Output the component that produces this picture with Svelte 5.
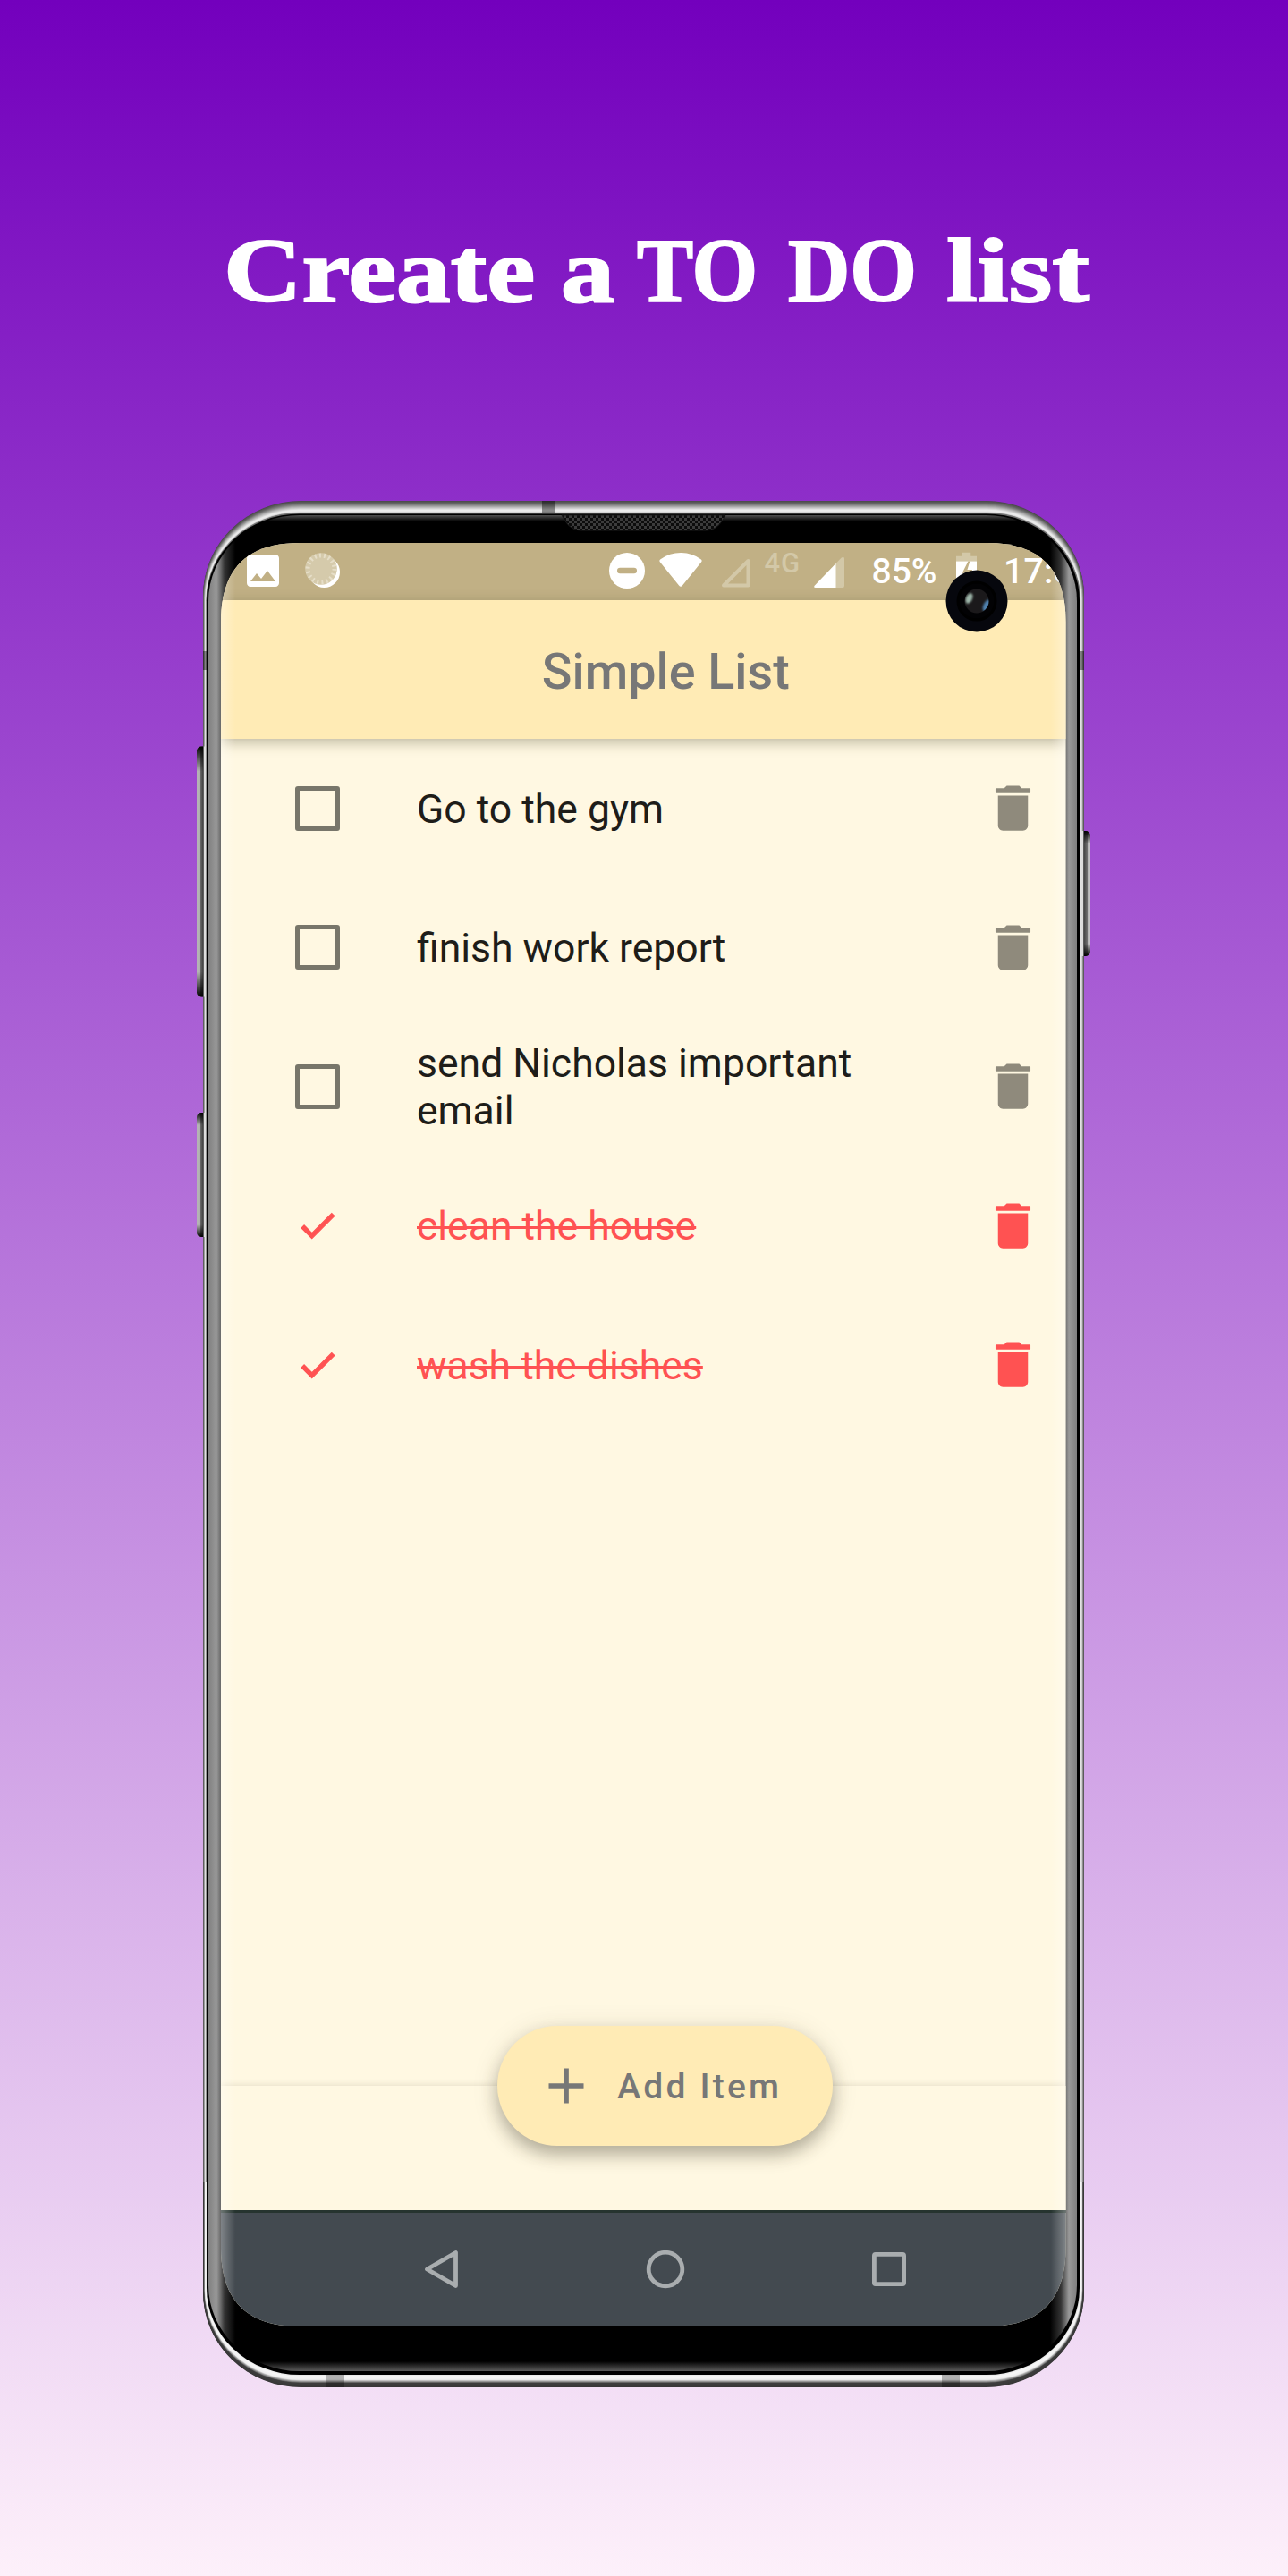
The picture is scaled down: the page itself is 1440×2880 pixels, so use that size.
<script>
  const items = [
    { text: 'Go to the gym', done: false },
    { text: 'finish work report', done: false },
    { text: 'send Nicholas important email', done: false },
    { text: 'clean the house', done: true },
    { text: 'wash the dishes', done: true },
  ];

  // Headline words with their start and measured width
  const words = [
    { text: 'Create', x: 250, w: 348 },
    { text: 'a', x: 627, w: 60 },
    { text: 'TO', x: 712, w: 135 },
    { text: 'DO', x: 881, w: 144 },
    { text: 'list', x: 1058, w: 160 },
  ];

  // Brightness profiles of the metal rim, from its outer edge inwards
  const topProfile = [[0, 74], [0.2, 105], [0.45, 175], [0.7, 238], [0.85, 225], [0.88, 120], [1, 110]];
  const bottomProfile = [[0, 56], [0.33, 64], [0.36, 110], [0.5, 190], [0.56, 238], [0.8, 248], [1, 225]];

  function sample(profile, t) {
    for (let i = 1; i < profile.length; i++) {
      const [t1, v1] = profile[i];
      if (t <= t1) {
        const [t0, v0] = profile[i - 1];
        return Math.round(v0 + ((v1 - v0) * (t - t0)) / (t1 - t0));
      }
    }
    return profile[profile.length - 1][1];
  }

  function makeRings(profile) {
    return Array.from({ length: 29 }, (_, i) => {
      const t = i / 28;
      const v = sample(profile, t);
      return {
        x: 227 + 4 * t, y: 560 + 14.5 * t,
        w: 985 - 8.500 * t, h: 2109 - 29 * t,
        rx: 110 - 6 * t, ry: 106 - 9 * t,
        fill: `rgb(${v},${v},${v})`,
      };
    });
  }

  const rims = [
    { clip: 'url(#upper)', rings: makeRings(topProfile) },
    { clip: 'url(#lower)', rings: makeRings(bottomProfile) },
  ];
</script>

<main class="page">
  <svg class="headline" viewBox="0 0 1440 540" role="img" aria-label="Create a TO DO list">
    {#each words as word}
      <text x={word.x} y="337" textLength={word.w} lengthAdjust="spacingAndGlyphs">{word.text}</text>
    {/each}
  </svg>

  <div class="phone">
    <svg class="frame" viewBox="210 540 1030 2140">
      <defs>
        <linearGradient id="edgeL" gradientUnits="userSpaceOnUse" x1="233" y1="0" x2="263" y2="0">
          <stop offset="0" stop-color="#808080" />
          <stop offset="0.3" stop-color="#999" />
          <stop offset="0.46" stop-color="#6a6a6a" />
          <stop offset="0.6" stop-color="#333" />
          <stop offset="1" stop-color="#000" />
        </linearGradient>
        <linearGradient id="edgeR" gradientUnits="userSpaceOnUse" x1="1204" y1="0" x2="1174" y2="0">
          <stop offset="0" stop-color="#808080" />
          <stop offset="0.3" stop-color="#999" />
          <stop offset="0.44" stop-color="#6a6a6a" />
          <stop offset="0.6" stop-color="#333" />
          <stop offset="1" stop-color="#000" />
        </linearGradient>
        <linearGradient id="lipTop" x1="0" y1="0" x2="0" y2="1">
          <stop offset="0" stop-color="#505050" />
          <stop offset="1" stop-color="#000" />
        </linearGradient>
        <linearGradient id="lipBottom" x1="0" y1="0" x2="0" y2="1">
          <stop offset="0" stop-color="#000" />
          <stop offset="1" stop-color="#5a5a5a" />
        </linearGradient>
        <linearGradient id="keyL" x1="0" y1="0" x2="1" y2="0">
          <stop offset="0" stop-color="#b5b5b5" />
          <stop offset="0.35" stop-color="#b0b0b0" />
          <stop offset="0.45" stop-color="#666" />
          <stop offset="1" stop-color="#111" />
        </linearGradient>
        <linearGradient id="keyR" x1="1" y1="0" x2="0" y2="0">
          <stop offset="0" stop-color="#c4c4c4" />
          <stop offset="0.25" stop-color="#b5b5b5" />
          <stop offset="0.35" stop-color="#6e6e6e" />
          <stop offset="1" stop-color="#222" />
        </linearGradient>
        <linearGradient id="keyEnds" x1="0" y1="0" x2="0" y2="1">
          <stop offset="0" stop-color="#000" />
          <stop offset="0.1" stop-color="#000" stop-opacity="0" />
          <stop offset="0.9" stop-color="#000" stop-opacity="0" />
          <stop offset="1" stop-color="#000" />
        </linearGradient>
        <pattern id="mesh" width="6" height="6" patternUnits="userSpaceOnUse">
          <rect width="6" height="6" fill="#0c0c0c" />
          <rect width="3" height="3" fill="#3c3c3c" />
          <rect x="3" y="3" width="3" height="3" fill="#3c3c3c" />
        </pattern>
        <clipPath id="glass">
          <rect x="233" y="576" width="971" height="2075" rx="102" ry="96" />
        </clipPath>
        <clipPath id="upper"><rect x="210" y="540" width="1030" height="1900" /></clipPath>
        <clipPath id="lower"><rect x="210" y="2440" width="1030" height="240" /></clipPath>
      </defs>

      {#each [[834.5, 280], [1244, 139]] as [y, h]}
        <path d="M230 {y}h-5a5 5 0 0 0-5 5v{h - 10}a5 5 0 0 0 5 5h5z" fill="url(#keyL)" />
        <path d="M230 {y}h-5a5 5 0 0 0-5 5v{h - 10}a5 5 0 0 0 5 5h5z" fill="url(#keyEnds)" />
      {/each}
      <path d="M1209 929h5a5 5 0 0 1 5 5v130a5 5 0 0 1-5 5h-5z" fill="url(#keyR)" />
      <path d="M1209 929h5a5 5 0 0 1 5 5v130a5 5 0 0 1-5 5h-5z" fill="url(#keyEnds)" />

      {#each rims as rim}
        <g clip-path={rim.clip}>
          {#each rim.rings as r}
            <rect x={r.x} y={r.y} width={r.w} height={r.h} rx={r.rx} ry={r.ry} fill={r.fill} />
          {/each}
        </g>
      {/each}
      <rect x="231" y="574.5" width="976" height="2080.500" rx="104" ry="97" fill="#000" />
      <g clip-path="url(#glass)">
        <rect x="233" y="576" width="30" height="2075" fill="url(#edgeL)" />
        <rect x="1174" y="576" width="30" height="2075" fill="url(#edgeR)" />
        <rect x="285" y="576" width="866" height="7" fill="url(#lipTop)" />
        <rect x="290" y="2640" width="860" height="11" fill="url(#lipBottom)" />
      </g>
      <path d="M628 576h183c-5 9-10 17-22 17h-139c-12 0-17-8-22-17z" fill="url(#mesh)" stroke="#1a1a1a" />

      <rect x="606" y="560" width="14" height="14" class="band" />
      <rect x="227" y="728" width="4" height="21" class="band" />
      <rect x="1207" y="728" width="5" height="21" class="band" />
      <rect x="364" y="2655" width="21" height="14" class="soft-band" />
      <rect x="1053" y="2655" width="20" height="14" class="soft-band" />
      <rect x="228" y="834.5" width="2" height="280" fill="#ddd" />
      <rect x="228" y="1244" width="2" height="139" fill="#ddd" />
      <rect x="1209" y="929" width="2" height="140" fill="#ddd" />
    </svg>

    <section class="screen">
      <div class="status">
        <svg class="s-image" viewBox="3 3 18 18"><path fill="#fff" d="M21 19V5c0-1.100-.9-2-2-2H5c-1.100 0-2 .9-2 2v14c0 1.100.9 2 2 2h14c1.100 0 2-.9 2-2zM8.500 13.500l2.500 3.010L14.500 12l4.500 6H5l3.500-4.500z" /></svg>
        <svg class="s-sync" viewBox="0 0 40 40">
          <circle cx="21.500" cy="21.500" r="17.500" fill="#fff" />
          <circle cx="18" cy="18" r="17.800" fill="#d5caab" />
          <circle cx="18" cy="18" r="15" fill="none" stroke="#e6dec8" stroke-width="5" stroke-dasharray="2 3.240" />
        </svg>
        <svg class="s-dnd" viewBox="0 0 40 40"><circle cx="20" cy="20" r="20" fill="#fff" /><rect x="9" y="16.800" width="22" height="6.400" rx="3.200" fill="#c1b085" /></svg>
        <svg class="s-wifi" viewBox="0 0 48 38"><path fill="#fff" d="M1 10.500Q-.5 8.500 1.500 7.200Q11.500 0 24 0t22.500 7.200q2 1.300.5 3.300L26 36.500q-2 2.500-4 0z" /></svg>
        <svg class="s-sig1" viewBox="0 0 34 34"><path fill="none" stroke="#d3c8a8" stroke-width="4" stroke-linejoin="round" d="M31.500 4v27.500H4z" /></svg>
        <span class="net">4G</span>
        <svg class="s-sig2" viewBox="0 0 34 34"><path fill="#d3c8a8" d="M30.500.8Q34-1.500 34 2v30q0 2-2 2H2q-3 0-1-2.500z" /><path fill="#fff" d="M24.500 7v27H2q-3 0-1-2.500z" /></svg>
        <span class="pct">85%</span>
        <svg class="s-batt" viewBox="0 0 24 38"><path fill="#d3c8a8" d="M7 0h10v4h7v6H0V4h7z" /><path fill="#fff" d="M0 10h24v28H0z" /><path fill="#c1b085" d="M14 10L7 24h6l-3 12 9-16h-6l3-10z" /></svg>
        <span class="time">17:0</span>
      </div>

      <header class="appbar"><h1>Simple List</h1></header>

      <ul class="list">
        {#each items as item}
          <li class:done={item.done}>
            <span class="mark">
              {#if item.done}
                <svg viewBox="0 0 24 24"><path d="M9 16.170L4.830 12l-1.420 1.410L9 19 21 7l-1.410-1.410z" /></svg>
              {:else}
                <span class="box"></span>
              {/if}
            </span>
            <span class="label">{item.text}</span>
            <svg class="trash" viewBox="0 0 24 24"><path d="M6 19c0 1.100.9 2 2 2h8c1.100 0 2-.9 2-2V7H6v12zM19 4h-3.500l-1-1h-5l-1 1H5v2h14V4z" /></svg>
          </li>
        {/each}
      </ul>

      <div class="bottombar">
        <button class="fab">
          <svg viewBox="0 0 40 40"><path d="M20 .5v39M.5 20h39" stroke="#777" stroke-width="5.700" /></svg>
          <span>Add Item</span>
        </button>
      </div>

      <nav class="nav">
        <svg viewBox="0 0 44 44"><path d="M37.500 3.500v37L5.500 22z" /></svg>
        <svg viewBox="0 0 44 44"><circle cx="22" cy="22" r="18.800" /></svg>
        <svg viewBox="0 0 44 44"><rect x="5.400" y="5.400" width="33.200" height="33.200" rx="1.500" /></svg>
      </nav>

      <div class="sheen"></div>
      <svg class="camera" viewBox="0 0 70 70">
        <defs>
          <filter id="glint"><feGaussianBlur stdDeviation="1.300" /></filter>
          <clipPath id="lens"><circle cx="35" cy="35" r="13.500" /></clipPath>
        </defs>
        <circle cx="35" cy="35" r="34.500" fill="#06070d" />
        <circle cx="35" cy="35" r="21" fill="#020204" stroke="#000" stroke-width="3" />
        <circle cx="35" cy="35" r="13.500" fill="#1b191b" />
        <g clip-path="url(#lens)" filter="url(#glint)">
          <ellipse cx="26.500" cy="32" rx="3.500" ry="6" fill="#9db5a9" transform="rotate(25 26.500 32)" />
          <ellipse cx="46" cy="40" rx="3.500" ry="7" fill="#4f82b0" transform="rotate(25 46 40)" />
        </g>
      </svg>
    </section>
  </div>
</main>

<style>
  :global(body) { margin: 0; }
  .page {
    width: 1440px;
    height: 2880px;
    overflow: hidden;
    display: flex;
    flex-direction: column;
    background: linear-gradient(#7300bd, #fdf0fa);
    font-family: Roboto, sans-serif;
  }
  .headline { display: block; width: 1440px; height: 540px; flex: none; }
  .headline text {
    font-family: 'Liberation Serif', serif;
    font-weight: 700;
    font-size: 102px;
    fill: #fff;
    stroke: #fff;
    stroke-width: 2px;
  }

  .phone { display: grid; width: 1030px; height: 2140px; margin-left: 210px; flex: none; }
  .frame, .screen { grid-area: 1 / 1; }
  .frame { width: 1030px; height: 2140px; }
  .band { fill: #000; fill-opacity: 0.42; }
  .soft-band { fill: #000; fill-opacity: 0.27; }

  .screen {
    position: relative;
    width: 944.500px;
    height: 1994px;
    margin: 67px 0 0 37px;
    clip-path: path('M0 88C0 29 29 0 88 0H856.500C915.500 0 944.500 29 944.500 88V1906C944.500 1965 915.500 1994 856.500 1994H88C29 1994 0 1965 0 1906Z');
    display: flex;
    flex-direction: column;
    background: #fff8e2;
  }

  .status {
    height: 63.500px;
    flex: none;
    background: #c1b085;
    display: flex;
    align-items: flex-start;
    white-space: nowrap;
    color: #fff;
    font-weight: 500;
  }
  .status svg, .status span { flex: none; }
  .s-image { width: 36px; height: 36px; margin: 12.500px 0 0 29px; }
  .s-sync { width: 40px; height: 40px; margin: 10.500px 0 0 29px; }
  .s-dnd { width: 40px; height: 40px; margin: 11px 0 0 300px; }
  .s-wifi { width: 48px; height: 38px; margin: 10.500px 0 0 15.500px; }
  .s-sig1 { width: 34px; height: 34px; margin: 16px 0 0 20px; }
  .net { width: 55px; margin-left: 16px; margin-top: 5px; font-size: 31px; line-height: 36px; letter-spacing: 1px; color: #d3c8a8; }
  .s-sig2 { width: 34px; height: 34px; margin: 16px 0 0 0; }
  .pct { width: 94px; margin-left: 31px; margin-top: 9px; font-size: 39px; line-height: 46px; }
  .s-batt { width: 23px; height: 38px; margin-top: 10px; }
  .time { margin-left: 30.500px; margin-top: 9px; font-size: 39.500px; line-height: 46px; }

  .appbar {
    height: 155.500px;
    flex: none;
    position: relative;
    display: flex;
    align-items: center;
    justify-content: center;
    background: #ffebb5;
    box-shadow: 0 4px 14px rgba(60, 55, 30, 0.34);
  }
  h1 { margin: 6px 0 0 50px; font-size: 55.700px; line-height: 64px; font-weight: 500; color: #777; }

  .list { list-style: none; margin: 0; padding: 0; flex: 1; }
  li { height: 155.500px; display: flex; align-items: center; color: #1e1d19; }
  .mark { width: 60px; margin-left: 78px; display: flex; justify-content: center; }
  .mark svg { width: 50px; height: 50px; margin-right: 1px; fill: #ff5252; stroke: #ff5252; stroke-width: 0.600px; }
  .box { width: 50px; height: 50px; box-sizing: border-box; border: 5.700px solid #78766a; border-radius: 3px; }
  .label { width: 560px; margin-left: 81px; padding-top: 3px; font-size: 44.500px; line-height: 53px; }
  .mark svg + .label { margin-left: 80px; }
  .trash { width: 67px; height: 67px; margin-left: 72.500px; fill: #8f8a7c; }
  .done { color: #ff5252; }
  .done .label { text-decoration: line-through; text-decoration-thickness: 2.500px; }
  .done .trash { fill: #ff5252; }

  .bottombar {
    height: 139px;
    flex: none;
    display: flex;
    justify-content: center;
    align-items: flex-start;
    background: #fff8e2;
    box-shadow: 0 -1px 7px rgba(60, 55, 30, 0.13);
  }
  .fab {
    width: 375px;
    height: 133.500px;
    box-sizing: border-box;
    margin: -66.500px 0 0 49px;
    padding: 1px 0 0 57px;
    display: flex;
    align-items: center;
    gap: 37px;
    border: 0;
    border-radius: 67px;
    background: #ffebb5;
    color: #777;
    font: 500 39px/46px Roboto, sans-serif;
    letter-spacing: 3.200px;
    box-shadow: 0 10px 18px rgba(60, 55, 40, 0.32), 0 4px 30px rgba(60, 55, 40, 0.13);
  }
  .fab svg { width: 40px; height: 40px; flex: none; }
  .fab span { padding-top: 2px; white-space: nowrap; }

  .nav {
    height: 130.500px;
    flex: none;
    box-sizing: border-box;
    border-top: 3.500px solid #26342f;
    display: flex;
    align-items: center;
    justify-content: center;
    gap: 206px;
    padding-left: 50px;
    background: #434a50;
  }
  .nav svg { width: 44px; height: 44px; fill: none; stroke: #a9adaf; stroke-width: 4.800px; stroke-linejoin: round; }

  /* Light falling off along the curved glass edges */
  .sheen {
    position: absolute;
    inset: 0;
    background:
      linear-gradient(90deg, rgba(255, 255, 255, 0.32), rgba(255, 255, 255, 0) 16px),
      linear-gradient(270deg, rgba(255, 255, 255, 0.32), rgba(255, 255, 255, 0) 17px);
  }
  .camera { position: absolute; left: 810px; top: 30px; width: 70px; height: 70px; }
</style>
